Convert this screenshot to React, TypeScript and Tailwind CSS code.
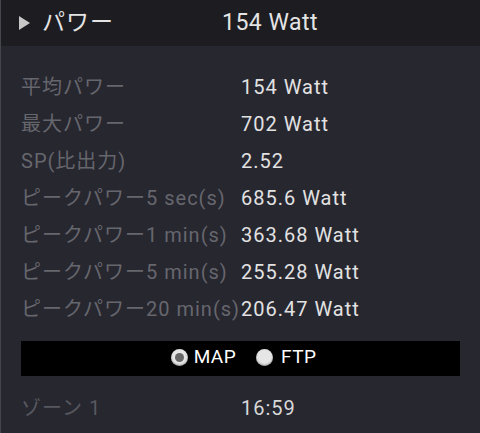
const rows: [string, string][] = [
  ['平均パワー', '154 Watt'],
  ['最大パワー', '702 Watt'],
  ['SP(比出力)', '2.52'],
  ['ピークパワー5 sec(s)', '685.6 Watt'],
  ['ピークパワー1 min(s)', '363.68 Watt'],
  ['ピークパワー5 min(s)', '255.28 Watt'],
  ['ピークパワー20 min(s)', '206.47 Watt'],
];

const font = { fontFamily: 'Roboto, "Noto Sans CJK JP", sans-serif' };

function Radio({ checked }: { checked?: boolean }) {
  return (
    <span className="w-[17px] h-[17px] rounded-full bg-[#e6e6e6] flex items-center justify-center shadow-[inset_0_-1px_2px_rgba(0,0,0,0.35)]">
      {checked && <span className="w-[9px] h-[9px] rounded-full bg-[#666]" />}
    </span>
  );
}

export default function App() {
  return (
    <div className="w-[480px] h-[433px] bg-[#272730] overflow-hidden border-l border-[#45454d]" style={font}>
      <div className="h-[46px] bg-[#1c1c21] flex items-center text-[#e4e4e4] text-[23px]">
        <span className="ml-[18px] w-0 h-0 border-y-[7px] border-y-transparent border-l-[11px] border-l-[#c8c8c8]" />
        <span className="ml-[12px] w-[180px] tracking-[1px]">パワー</span>
        <span className="tracking-[0.5px]">154 Watt</span>
      </div>
      <div className="pt-[22px] px-[20px]">
        {rows.map(([k, v]) => (
          <div key={k} className="h-[37px] flex items-center text-[20px] tracking-[1px]">
            <span className="w-[220px] text-[#66666d] whitespace-nowrap">{k}</span>
            <span className="text-[#e2e2e2]">{v}</span>
          </div>
        ))}
        <div className="mt-[14px] h-[35px] bg-black flex items-center justify-center text-[19px] text-white pb-[2px] pl-[6px] tracking-[0.4px]">
          <Radio checked />
          <span className="ml-[6px]">MAP</span>
          <span className="ml-[20px]"><Radio /></span>
          <span className="ml-[8px]">FTP</span>
        </div>
        <div className="h-[64px] flex items-center text-[20px] tracking-[1px]">
          <span className="w-[220px] text-[#58585f]">ゾーン 1</span>
          <span className="text-[#d8d8d8]">16:59</span>
        </div>
      </div>
    </div>
  );
}
